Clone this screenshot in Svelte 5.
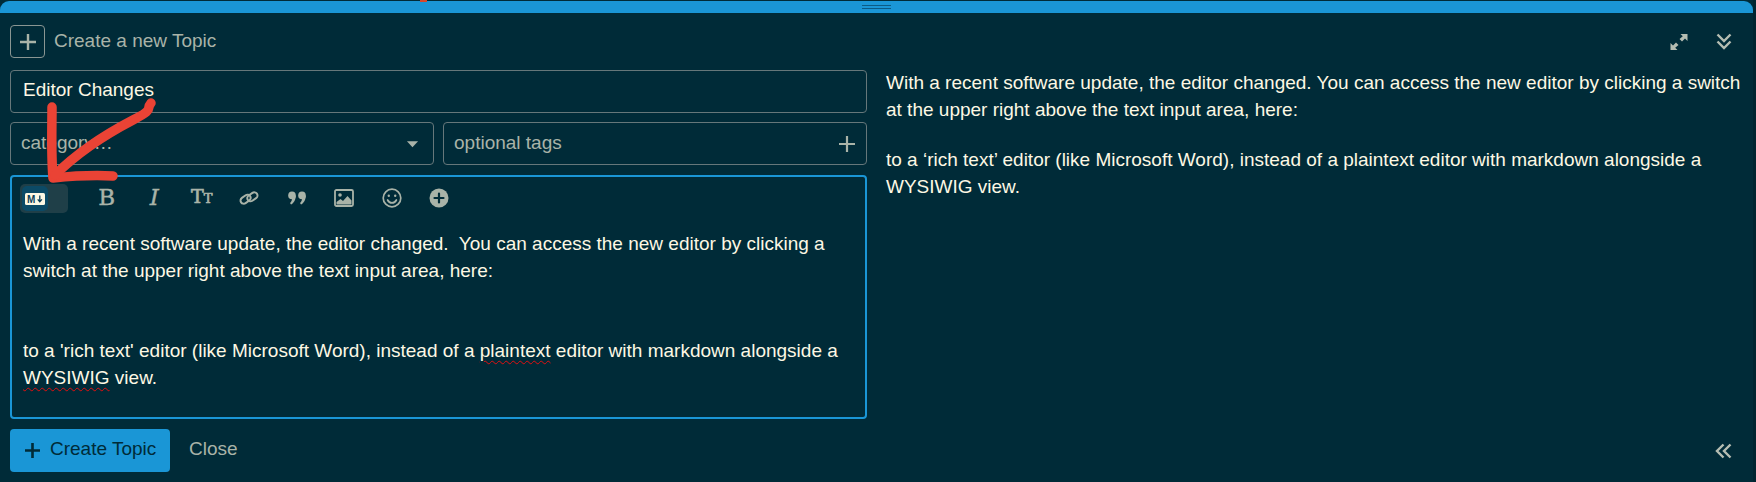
<script>
	let title = 'Editor Changes';
</script>

<div class="composer">
	<div class="grip"><span class="grip-lines"></span></div>
	<div class="composer-body">
		<div class="left">
			<div class="header">
				<span class="action-box">
					<svg viewBox="0 0 20 20" width="20" height="20"><path d="M10 2v16M2 10h16" /></svg>
				</span>
				<span class="action-label">Create a new Topic</span>
			</div>
			<div class="field title">{title}</div>
			<div class="selects">
				<div class="field select">
					<span class="placeholder">category…</span>
					<svg class="caret" viewBox="0 0 14 8" width="13" height="8"><path d="M1 1h12L7 7.500z" /></svg>
				</div>
				<div class="field select">
					<span class="placeholder">optional tags</span>
					<svg class="tag-plus" viewBox="0 0 16 16" width="16" height="16"><path d="M8 0v16M0 8h16" /></svg>
				</div>
			</div>
			<div class="editor">
				<div class="toolbar">
					<div class="toggle">
						<span class="knob">
							<svg viewBox="0 0 20 12" width="20" height="12">
								<rect width="20" height="12" rx="1.500" fill="#fdf8e4" />
								<text x="2" y="9.500" class="md">M</text>
								<path d="M14.800 2.500v6M12.700 6.400 14.800 8.800l2.100-2.400" fill="none" stroke="#0b3f59" stroke-width="1.300" />
							</svg>
						</span>
					</div>
					<span class="tool glyph">B</span>
					<span class="tool glyph italic">I</span>
					<span class="tool glyph size">T<small>T</small></span>
					<span class="tool">
						<svg viewBox="0 0 20 20" width="20" height="20" fill="none" stroke="#a9b3a8" stroke-width="2">
							<rect x="1" y="8" width="11" height="6.400" rx="3.200" transform="rotate(-35 6.500 11)" />
							<rect x="8" y="5.600" width="11" height="6.400" rx="3.200" transform="rotate(-35 13.500 9)" />
						</svg>
					</span>
					<span class="tool">
						<svg viewBox="0 0 18 14" width="18" height="14" fill="#a9b3a8">
							<circle cx="4" cy="4.400" r="3.800" />
							<circle cx="14" cy="4.400" r="3.800" />
							<path d="M7.800 4.400c0 4-1.800 7.600-4.800 9L2 12c1.600-1.200 2-3 2-4.500zM17.800 4.400c0 4-1.800 7.600-4.800 9L12 12c1.600-1.200 2-3 2-4.500z" />
						</svg>
					</span>
					<span class="tool">
						<svg viewBox="0 0 20 18" width="20" height="18">
							<rect x="1" y="1" width="18" height="16" rx="1.500" fill="none" stroke="#a9b3a8" stroke-width="1.800" />
							<circle cx="6" cy="6" r="1.800" fill="#a9b3a8" />
							<path d="M2.500 15.500v-2.500l4-3 2.500 2 4.500-5 4 4.500v4z" fill="#a9b3a8" />
						</svg>
					</span>
					<span class="tool">
						<svg viewBox="0 0 20 20" width="20" height="20" fill="none" stroke="#a9b3a8" stroke-width="1.700">
							<circle cx="10" cy="10" r="8.800" />
							<circle cx="6.800" cy="7.800" r="1.200" fill="#a9b3a8" stroke="none" />
							<circle cx="13.200" cy="7.800" r="1.200" fill="#a9b3a8" stroke="none" />
							<path d="M5.600 12c1 2 2.700 2.900 4.400 2.900s3.400-.9 4.400-2.900" stroke-linecap="round" />
						</svg>
					</span>
					<span class="tool">
						<svg viewBox="0 0 20 20" width="20" height="20">
							<circle cx="10" cy="10" r="9.500" fill="#a9b3a8" />
							<path d="M10 5.500v9M5.500 10h9" stroke="#002b38" stroke-width="2.200" stroke-linecap="round" />
						</svg>
					</span>
				</div>
				<div class="editor-text">
					<p>With a recent software update, the editor changed.&nbsp; You can access the new editor by clicking a<br />switch at the upper right above the text input area, here:</p>
					<p class="spaced">to a 'rich text' editor (like Microsoft Word), instead of a <span class="misspelt">plaintext</span> editor with markdown alongside a<br /><span class="misspelt">WYSIWIG</span> view.</p>
				</div>
			</div>
			<div class="footer">
				<button class="create">
					<svg viewBox="0 0 16 16" width="15" height="15"><path d="M8 0v16M0 8h16" /></svg>
					Create Topic
				</button>
				<span class="close">Close</span>
			</div>
		</div>

		<div class="right">
			<div class="right-actions">
				<svg viewBox="0 0 18 18" width="18" height="18" fill="#b5bdb2">
					<path d="M10.500 1H17.500V8L15 5.500 12 8.500 9.500 6 12.800 3.300zM7.500 17H.5V10L3 12.500 6 9.500 8.500 12 5.200 14.700z" />
				</svg>
				<svg viewBox="0 0 16 17" width="16" height="17" fill="none" stroke="#b5bdb2" stroke-width="2.400">
					<path d="M1.500 1.500 8 8l6.500-6.500M1.500 8.500 8 15l6.500-6.500" />
				</svg>
			</div>
			<div class="preview">
				<p>With a recent software update, the editor changed. You can access the new editor by clicking a switch at the upper right above the text input area, here:</p>
				<p>to a ‘rich text’ editor (like Microsoft Word), instead of a plaintext editor with markdown alongside a WYSIWIG view.</p>
			</div>
			<div class="collapse">
				<svg viewBox="0 0 17 16" width="17" height="16" fill="none" stroke="#b5bdb2" stroke-width="2.400">
					<path d="M8.500 1.500 2 8l6.500 6.500M15.500 1.500 9 8l6.500 6.500" />
				</svg>
			</div>
		</div>
	</div>

	<!-- hand drawn annotation on top of the screenshot -->
	<svg class="arrow" viewBox="0 0 160 190" width="160" height="190" fill="none" stroke="#ea4335" stroke-width="9.500" stroke-linecap="round" stroke-linejoin="round">
		<path d="M52 107c0 22-1 48 1 71 20-2 42-3 60-2" />
		<path d="M55 175C80 150 110 132 133 120S145 110 151 103" />
	</svg>
	<span class="red-tick"></span>
</div>

<style>
	:global(body) {
		background: #002530;
	}

	.composer {
		position: relative;
		box-sizing: border-box;
		width: 1753px;
		height: 482px;
		padding-top: 1px;
		background: #002b38;
		color: #fdf8e4;
		font-family: 'Liberation Sans', Arial, sans-serif;
		font-size: 19px;
	}

	.grip {
		display: flex;
		justify-content: center;
		align-items: center;
		height: 12px;
		background: #1a96d6;
		border-radius: 9px 9px 0 0;
	}

	.grip-lines {
		width: 29px;
		height: 2px;
		border-top: 1px solid #0b5b85;
		border-bottom: 1px solid #0b5b85;
	}

	.composer-body {
		display: flex;
		gap: 19px;
		padding: 12px 0 0 10px;
	}

	.left {
		width: 857px;
		flex: none;
		display: flex;
		flex-direction: column;
	}

	.header {
		display: flex;
		align-items: center;
		gap: 9px;
		height: 33px;
		color: #a9b3a8;
	}

	.action-label {
		padding-bottom: 2px;
	}

	.action-box {
		display: flex;
		align-items: center;
		justify-content: center;
		box-sizing: border-box;
		width: 35px;
		height: 33px;
		border: 1px solid #8a9693;
		border-radius: 4px;
	}

	.action-box path {
		stroke: #a9b3a8;
		stroke-width: 2.400;
	}

	.field {
		box-sizing: border-box;
		border: 1px solid #66777a;
		border-radius: 4px;
		height: 43px;
		display: flex;
		align-items: center;
	}

	.title {
		margin-top: 12px;
		padding: 0 0 3px 12px;
	}

	.selects {
		display: grid;
		grid-template-columns: 424px 1fr;
		gap: 9px;
		margin-top: 9px;
	}

	.select {
		justify-content: space-between;
		padding: 0 11px 0 10px;
	}

	.placeholder {
		color: #a9b3a8;
		padding-bottom: 2px;
	}

	.caret {
		margin-right: 3px;
	}

	.caret path {
		fill: #a9b3a8;
	}

	.tag-plus path {
		stroke: #a9b3a8;
		stroke-width: 2.200;
	}

	.editor {
		box-sizing: border-box;
		height: 244px;
		margin-top: 10px;
		border: 2px solid #1a96d6;
		border-radius: 4px;
	}

	.toolbar {
		display: flex;
		align-items: center;
		height: 29px;
		margin-top: 7px;
		padding-left: 8px;
	}

	.toggle {
		box-sizing: border-box;
		width: 48px;
		height: 29px;
		margin-right: 15px;
		padding: 2px;
		background: #1f3f48;
		border-radius: 5px;
	}

	.knob {
		display: flex;
		align-items: center;
		justify-content: center;
		width: 26px;
		height: 25px;
		background: #0b4a66;
		border-radius: 5px;
	}

	.md {
		font-family: 'Liberation Sans', sans-serif;
		font-size: 10px;
		font-weight: 700;
		fill: #0b3f59;
	}

	.tool {
		display: flex;
		align-items: center;
		justify-content: center;
		width: 47.500px;
		height: 27px;
		padding-bottom: 2px;
		color: #a9b3a8;
	}

	.glyph {
		height: 25px;
		padding-bottom: 4px;
		font-family: 'DejaVu Serif', serif;
		font-size: 23px;
		-webkit-text-stroke: 0.400px #a9b3a8;
	}

	.italic {
		font-style: italic;
	}

	.size {
		font-size: 19px;
		-webkit-text-stroke: 0.700px #a9b3a8;
		align-items: baseline;
		line-height: 24px;
	}

	.size small {
		font-size: 13px;
	}

	.editor-text {
		padding: 17px 0 0 11px;
		line-height: 27px;
	}

	.editor-text p {
		margin: 0;
	}

	.editor-text .spaced {
		margin-top: 53px;
	}

	.misspelt {
		text-decoration: underline wavy #e01010 1px;
		text-underline-offset: 3px;
	}

	.footer {
		display: flex;
		align-items: center;
		gap: 19px;
		margin-top: 10px;
	}

	.create {
		display: flex;
		align-items: center;
		gap: 10px;
		box-sizing: border-box;
		width: 160px;
		height: 43px;
		padding: 0 0 4px 15px;
		border: none;
		border-radius: 4px;
		background: #1a96d6;
		color: #002b38;
		font: inherit;
	}

	.create svg {
		margin-top: 4px;
	}

	.create path {
		stroke: #002b38;
		stroke-width: 2.800;
	}

	.close {
		color: #a9b3a8;
		padding-bottom: 4px;
	}

	.right {
		flex: 1;
		position: relative;
		display: flex;
		flex-direction: column;
	}

	.right-actions {
		display: flex;
		justify-content: flex-end;
		align-items: center;
		gap: 28px;
		height: 33px;
		padding-right: 21px;
	}

	.preview {
		margin-top: 11px;
		width: 860px;
		line-height: 27px;
	}

	.preview p {
		margin: 0 0 23px;
	}

	.collapse {
		position: absolute;
		right: 21px;
		top: 418px;
		display: flex;
	}

	.arrow {
		position: absolute;
		left: 0;
		top: 0;
		pointer-events: none;
	}

	.red-tick {
		position: absolute;
		left: 420px;
		top: 0;
		width: 7px;
		height: 2px;
		background: #d9472b;
	}
</style>
